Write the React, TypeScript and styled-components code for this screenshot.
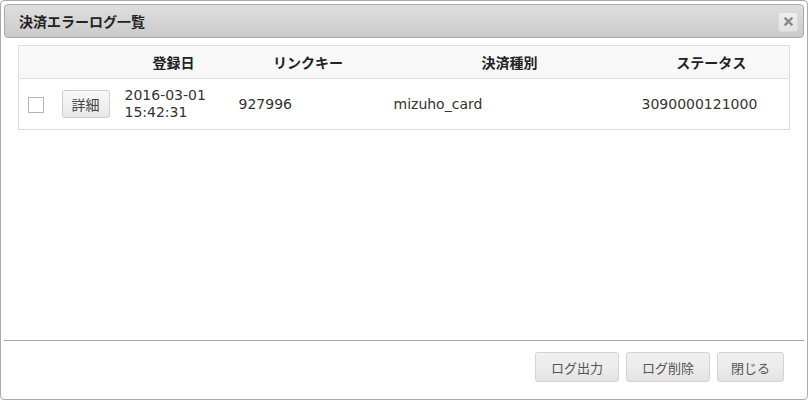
import React from "react";
import styled, { createGlobalStyle } from "styled-components";

const GlobalStyle = createGlobalStyle`
  html, body {
    margin: 0;
    padding: 0;
    background: #fff;
  }
  body {
    font-family: "DejaVu Sans", "Noto Sans CJK JP", sans-serif;
    font-size: 14px;
    color: #333;
  }
`;

const Dialog = styled.div`
  width: 808px;
  height: 400px;
  box-sizing: border-box;
  border: 1px solid #aaa;
  border-radius: 4px;
  padding: 3px;
  background: #fff;
  display: flex;
  flex-direction: column;
`;

const TitleBar = styled.div`
  height: 34px;
  box-sizing: border-box;
  border: 1px solid #aaa;
  border-radius: 4px;
  background: linear-gradient(to bottom, #dfdfdf 0%, #cacaca 100%);
  display: flex;
  align-items: center;
  justify-content: space-between;
  padding: 0 5px 0 14px;
`;

const Title = styled.span`
  font-weight: bold;
  font-size: 14px;
  color: #222;
`;

const CloseButton = styled.button`
  width: 20px;
  height: 20px;
  padding: 0;
  border: 1px solid #d8d8d8;
  border-radius: 3px;
  background: linear-gradient(to bottom, #eeeeee, #e2e2e2);
  display: flex;
  align-items: center;
  justify-content: center;
  margin-top: 1px;
  cursor: pointer;
`;

const Content = styled.div`
  flex: 1;
  padding: 7px 16px 0 14px;
`;

const Table = styled.table`
  width: 771px;
  border-collapse: collapse;
  table-layout: fixed;
  border: 1px solid #dedede;
`;

const HeadRow = styled.tr`
  background: #f8f8f8;
  height: 33px;
  border-bottom: 1px solid #dedede;
`;

const Th = styled.th`
  font-weight: bold;
  font-size: 14px;
  color: #222;
  text-align: center;
  padding: 0;
`;

const BodyRow = styled.tr`
  height: 51px;
`;

const Td = styled.td<{ center?: boolean }>`
  padding: 0 0 0 ${(p) => (p.center ? "0" : "8px")};
  text-align: ${(p) => (p.center ? "center" : "left")};
  vertical-align: middle;
  color: #333;
  font-size: 14px;
  line-height: 17px;
`;

const CheckBox = styled.span`
  display: inline-block;
  width: 14px;
  height: 14px;
  border: 1px solid #b5b5b5;
  background: #fff;
  vertical-align: middle;
  margin-top: 2px;
`;

const DetailButton = styled.button`
  height: 28px;
  padding: 0 9px;
  margin-left: 1px;
  border: 1px solid #cfcfcf;
  border-radius: 3px;
  background: linear-gradient(to bottom, #f8f8f8, #e8e8e8);
  color: #444;
  font-family: "Noto Sans CJK JP", sans-serif;
  font-size: 14px;
  cursor: pointer;
`;

const Footer = styled.div`
  height: 56px;
  box-sizing: border-box;
  border-top: 1px solid #aaa;
  display: flex;
  justify-content: flex-end;
  align-items: flex-start;
  gap: 7px;
  padding: 11px 20px 0 0;
`;

const FooterButton = styled.button`
  height: 30px;
  padding: 0 15px;
  border: 1px solid #d3d3d3;
  border-radius: 3px;
  background: linear-gradient(to bottom, #f0f0f0 0%, #ececec 50%, #e3e3e3 100%);
  color: #555;
  font-family: "Noto Sans CJK JP", sans-serif;
  font-size: 13px;
  cursor: pointer;
  &:last-child {
    padding: 0 13px;
  }
`;

const columns = [34, 64, 114, 155, 248, 156];
const headers = ["", "", "登録日", "リンクキー", "決済種別", "ステータス"];

const rows = [
  {
    date: "2016-03-01",
    time: "15:42:31",
    key: "927996",
    type: "mizuho_card",
    status: "3090000121000",
  },
];

const CloseIcon = () => (
  <svg width="9" height="9" viewBox="0 0 9 9">
    <path d="M1.5 1.5 L7.5 7.5 M7.5 1.5 L1.5 7.5" stroke="#888" strokeWidth="2.4" strokeLinecap="square" />
  </svg>
);

const App: React.FC = () => {
  return (
    <>
      <GlobalStyle />
      <Dialog>
        <TitleBar>
          <Title>決済エラーログ一覧</Title>
          <CloseButton aria-label="close">
            <CloseIcon />
          </CloseButton>
        </TitleBar>
        <Content>
          <Table>
            <colgroup>
              {columns.map((w, i) => (
                <col key={i} style={{ width: w }} />
              ))}
            </colgroup>
            <thead>
              <HeadRow>
                {headers.map((h, i) => (
                  <Th key={i}>{h}</Th>
                ))}
              </HeadRow>
            </thead>
            <tbody>
              {rows.map((r) => (
                <BodyRow key={r.key}>
                  <Td center>
                    <CheckBox />
                  </Td>
                  <Td>
                    <DetailButton>詳細</DetailButton>
                  </Td>
                  <Td>
                    {r.date}
                    <br />
                    {r.time}
                  </Td>
                  <Td>{r.key}</Td>
                  <Td>{r.type}</Td>
                  <Td>{r.status}</Td>
                </BodyRow>
              ))}
            </tbody>
          </Table>
        </Content>
        <Footer>
          <FooterButton>ログ出力</FooterButton>
          <FooterButton>ログ削除</FooterButton>
          <FooterButton>閉じる</FooterButton>
        </Footer>
      </Dialog>
    </>
  );
};

export default App;
